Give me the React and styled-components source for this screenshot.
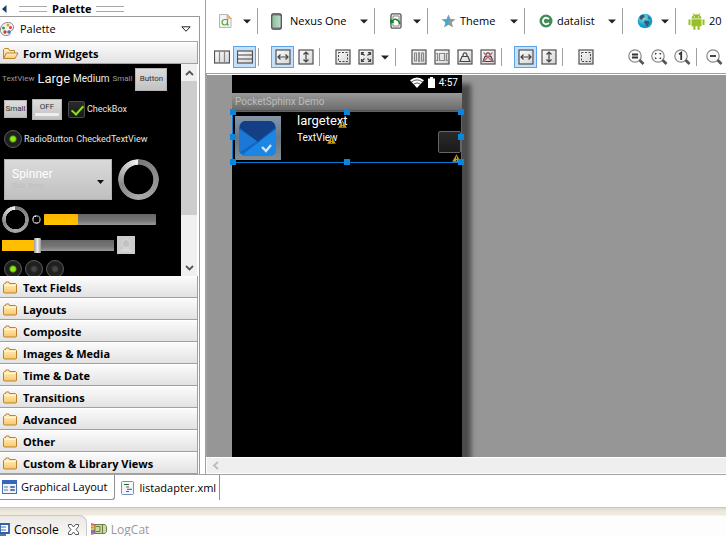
import React from "react";
import styled, { createGlobalStyle, css } from "styled-components";

const Global = createGlobalStyle`
  * { box-sizing: border-box; }
  body { margin: 0; background: #fff; overflow: hidden; }
  button, input, select { font: inherit; color: inherit; margin: 0; padding: 0; border: 0; background: none; }
  svg { display: block; flex: none; }
`;

const ui = `"Open Sans", "Noto Sans", sans-serif`;
const droid = `Roboto, sans-serif`;

const Page = styled.div`
  display: flex;
  flex-direction: column;
  height: 100vh;
  font: 11px/16px ${ui};
  color: #000;
`;
const Workbench = styled.main`
  flex: 1;
  min-height: 0;
  display: grid;
  grid-template-columns: 205px minmax(0, 1fr);
  border-bottom: 1px solid #a2a2a2;
`;

/* ---------- palette ---------- */
const PalettePane = styled.aside`
  display: flex;
  flex-direction: column;
  min-height: 0;
  padding-right: 5px;
`;
const PaletteTitle = styled.header`
  display: flex;
  align-items: center;
  gap: 5px;
  height: 16px;
  padding: 2px 0 0 2px;
  font-weight: 700;
`;
const CollapseButton = styled.button`
  width: 12px;
  height: 12px;
  display: flex;
  align-items: center;
`;
const Grip = styled.span`
  width: 28px;
  height: 6px;
  border: solid #a8a8a8;
  border-width: 1px 0;
`;
const PaletteBody = styled.div`
  flex: 1;
  min-height: 0;
  display: flex;
  flex-direction: column;
  border: solid #9a9a9a;
  border-width: 1px 1px 0 0;
  padding: 0 1px 0 0;
`;
const PaletteMenu = styled.button`
  display: flex;
  align-items: center;
  gap: 6px;
  height: 25px;
  padding: 0 7px 0 0;
  border-bottom: 1px solid #a8a8a8;
  text-align: left;
  span { flex: 1; }
`;
const Drawer = styled.button`
  display: flex;
  align-items: center;
  gap: 4px;
  flex: none;
  height: 22px;
  padding: 2px 0 0 3px;
  border: solid #a0a0a0;
  border-width: 0 1px 1px 0;
  background: linear-gradient(#fcfcfc, #e2e2e2);
  box-shadow: inset 0 1px #fff;
  font-weight: 700;
  text-align: left;
  white-space: nowrap;
`;
const PreviewPane = styled.div`
  flex: 1;
  min-height: 0;
  display: flex;
  overflow: hidden;
`;
const Preview = styled.div`
  flex: 1;
  min-width: 0;
  background: #000;
  color: #e6e6e6;
  font: 9px/12px ${droid};
  overflow: hidden;
`;
const PreviewRow = styled.div`
  display: flex;
  align-items: center;
  gap: ${(p) => p.$gap || 3}px;
  height: ${(p) => p.$h || 30}px;
  padding-left: ${(p) => p.$pad || 4}px;
  white-space: nowrap;
`;
const Sample = styled.span`
  font-size: ${(p) => p.$size}px;
  color: ${(p) => (p.$dim ? "#999" : "#eee")};
`;
const DroidButton = styled.button`
  height: ${(p) => p.$h}px;
  width: ${(p) => p.$w}px;
  background: linear-gradient(#dcdcdc, #c2c2c2);
  border: 1px solid #b4b4b4;
  color: #333;
  font-size: 8px;
  line-height: 10px;
`;
const Toggle = styled(DroidButton)`
  display: flex;
  flex-direction: column;
  align-items: center;
  justify-content: center;
  gap: 1px;
  margin: 0 3px 0 2px;
  i { width: 24px; height: 3px; background: #eee; border-radius: 1px; }
`;
const Field = styled.label`
  display: flex;
  align-items: center;
  gap: 2px;
`;
const Check = styled.input`
  appearance: none;
  position: relative;
  width: ${(p) => p.$size || 17}px;
  height: ${(p) => p.$size || 17}px;
  background: linear-gradient(#2a2a2a, #1a1a1a);
  border: 1px solid ${(p) => (p.$size ? "#666" : "#4a4a4a")};
  border-radius: 2px;
  &:checked::after {
    content: "";
    position: absolute;
    left: 5px;
    top: 1px;
    width: 5px;
    height: 10px;
    border: solid #8fe11c;
    border-width: 0 2px 2px 0;
    transform: rotate(42deg);
  }
`;
const Radio = styled.input`
  appearance: none;
  flex: none;
  width: 18px;
  height: 18px;
  border: 1px solid #5c5c5c;
  border-radius: 50%;
  background: radial-gradient(circle, #444 0 2px, #202020 4px);
  &:checked { background: radial-gradient(circle, #8ee81a 0 2px, #5fae0c 3px, #202020 4px); }
`;
const SpinnerBox = styled.label`
  position: relative;
  display: block;
  width: 108px;
  height: 41px;
  background: linear-gradient(#dadada, #c0c0c0);
  border: 1px solid #b0b0b0;
  select {
    appearance: none;
    width: 100%;
    height: 28px;
    padding: 0 0 0 7px;
    color: #fff;
    font-size: 12px;
  }
  small { position: absolute; left: 7px; top: 20px; font-size: 8px; color: #bfbfbf; }
  svg { position: absolute; right: 7px; top: 20px; }
`;
const Ring = styled.div`
  flex: none;
  width: ${(p) => p.$size}px;
  height: ${(p) => p.$size}px;
  border-radius: 50%;
  background: conic-gradient(#777, #aaa 50%, #888 70%, #f6f6f6);
  mask: radial-gradient(closest-side, transparent ${(p) => p.$hole}%, #000 ${(p) => p.$hole + 4}%);
`;
const track = css`
  background: linear-gradient(#666, #777 60%, #999);
  border-radius: 1px;
`;
const fill = css`
  background: linear-gradient(#ffb400, #ffc400);
  border-radius: 1px;
`;
const Progress = styled.progress`
  appearance: none;
  width: 112px;
  height: 11px;
  &::-webkit-progress-bar { ${track} }
  &::-webkit-progress-value { ${fill} }
`;
const Seek = styled.input`
  appearance: none;
  width: 112px;
  height: 16px;
  background: linear-gradient(90deg, #ffbe00 30%, transparent 30%) center / 100% 11px no-repeat,
    linear-gradient(#666, #777 60%, #999) center / 100% 11px no-repeat;
  &::-webkit-slider-thumb {
    appearance: none;
    width: 7px;
    height: 15px;
    border-radius: 1px;
    background: linear-gradient(90deg, #999, #eee 50%, #999);
  }
`;
const ScrollBar = styled.div`
  width: 17px;
  border-right: 1px solid #fff;
  display: flex;
  flex-direction: column;
  background: #f0f0f0;
  button { height: 17px; display: grid; place-items: center; }
  i { flex: 0 1 134px; background: #cdcdcd; }
  b { flex: 1 0 20px; }
`;

/* ---------- editor ---------- */
const Editor = styled.section`
  display: flex;
  flex-direction: column;
  min-width: 0;
  min-height: 0;
  border-left: 1px solid #a0a0a0;
`;
const Toolbars = styled.div`
  height: 73px;
  padding-top: 8px;
  display: flex;
  flex-direction: column;
  gap: 12px;
  overflow: hidden;
  flex: none;
`;
const ConfigBar = styled.div`
  display: flex;
  height: 26px;
`;
const ConfigItem = styled.label`
  display: flex;
  align-items: center;
  flex: none;
  gap: ${(p) => p.$gap || 4}px;
  width: ${(p) => p.$w}px;
  padding: 0 6px 0 ${(p) => p.$pad || 13}px;
  border-right: 1px solid #a0a0a0;
  select, span { appearance: none; flex: 1; min-width: 0; }
  button { display: flex; align-items: center; justify-content: space-between; flex: 1; }
`;
const ActionBar = styled.div`
  display: flex;
  align-items: center;
  height: 22px;
  padding-left: 4px;
`;
const Tool = styled.button`
  display: grid;
  place-items: center;
  flex: none;
  width: 23px;
  height: 22px;
  ${(p) => p.$on && css`
    background: #c4e0fa;
    border: 1px solid #62a2e4;
  `}
`;
const CaretTool = styled(Tool)`
  width: 16px;
`;
const Divider = styled.span`
  flex: none;
  width: 1px;
  height: 18px;
  background: #a0a0a0;
  margin: 0 ${(p) => p.$after || 11}px 0 2px;
`;
const ZoomTools = styled.div`
  display: flex;
  align-items: center;
  margin-left: 28px;
`;
const Canvas = styled.div`
  flex: 1;
  min-height: 0;
  display: flex;
  border: solid #a0a0a0;
  border-width: 1px 0 0 1px;
  background: #969696;
  box-shadow: inset 0 1px #fff;
  padding: 1px 0 0 25px;
  overflow: hidden;
`;
const Phone = styled.div`
  width: 230px;
  height: 384px;
  flex: none;
  background: #000;
  color: #fff;
  font: 10px/12px ${droid};
  box-shadow: 9px 9px 5px rgba(0, 0, 0, 0.5);
`;
const StatusBar = styled.div`
  display: flex;
  justify-content: flex-end;
  align-items: center;
  gap: 4px;
  height: 18px;
  padding: 0 4px 3px 0;
`;
const AppTitle = styled.div`
  height: 18px;
  padding-left: 3px;
  line-height: 17px;
  color: #bcbcbc;
  background: linear-gradient(#999, #6c6c6c);
  border-bottom: 1px solid #555;
`;
const ListRow = styled.div`
  position: relative;
  display: flex;
  gap: 16px;
  height: 52px;
  padding: 4px 0 0 2px;
  border: 1px solid #0a7cd0;
`;
const RowText = styled.div`
  flex: 1;
  display: flex;
  flex-direction: column;
  gap: 2px;
  margin-top: -4px;
  align-items: flex-start;
`;
const RowLine = styled.span`
  position: relative;
  font-size: ${(p) => p.$size}px;
  line-height: ${(p) => p.$size + 4}px;
`;
const Warning = styled.svg`
  position: absolute;
  right: ${(p) => p.$r}px;
  bottom: ${(p) => p.$b}px;
`;
const Handle = styled.i`
  position: absolute;
  width: 6px;
  height: 6px;
  margin: -3px;
  background: #0a86dc;
  left: ${(p) => p.$x}%;
  top: ${(p) => p.$y}%;
`;
const RowCheck = styled(Check)`
  align-self: flex-start;
  height: 22px;
  width: 23px;
  margin-top: 15px;
`;
const HScroll = styled.div`
  flex: none;
  height: 17px;
  border: solid #fff;
  border-width: 1px 0 1px 1px;
  background: #efefef;
  display: flex;
  align-items: center;
  padding-left: 4px;
`;

/* ---------- bottom ---------- */
const EditorTabs = styled.nav`
  display: flex;
  flex: none;
  height: 32px;
  padding-bottom: 7px;
`;
const EditorTab = styled.button`
  display: flex;
  align-items: center;
  gap: ${(p) => (p.$on ? 4 : 6)}px;
  padding: 0 3px 0 ${(p) => (p.$on ? 2 : 6)}px;
  border-right: 1px solid #909090;
  white-space: nowrap;
  ${(p) => p.$on && css`
    padding-right: 6px;
    border-bottom: 1px solid #909090;
    border-bottom-right-radius: 3px;
  `}
`;
const Views = styled.footer`
  flex: none;
  display: flex;
  border-top: 1px solid #b9c6e0;
  background: linear-gradient(#dedad2, #efeadd 4px 7px, #fdfdfe 8px);
  height: 29px;
  padding-top: 7px;
  font-size: 12px;
  line-height: 13px;
`;
const ViewTab = styled.button`
  display: flex;
  align-items: center;
  gap: 4px;
  padding: 7px 6px 0 4px;
  line-height: 13px;
  color: ${(p) => (p.$on ? "#000" : "#999")};
  ${(p) => p.$on && css`
    padding-left: 0;
    background: linear-gradient(#ebe9e4, #f7f7f5);
    border: solid #c9c9cc;
    border-width: 1px 1px 0 0;
    border-top-right-radius: 8px;
  `}
`;

/* ---------- icons ---------- */
const Caret = () => (
  <svg width="8" height="5" viewBox="0 0 8 5"><path d="M0 0.5h8L4 4.5z" fill="#222" /></svg>
);
const Folder = ({ open }) => (
  <svg width="16" height="16" viewBox="0 0 16 16">
    <defs>
      <linearGradient id="fold" x1="0" y1="0" x2="0" y2="1">
        <stop offset="0" stopColor="#fff3cf" /><stop offset="1" stopColor="#f8c865" />
      </linearGradient>
    </defs>
    {open ? (
      <g stroke="#b98536" fill="url(#fold)">
        <path d="M.5 12.5v-9l1-1h4l1 2h5v3" />
        <path d="M.5 12.5l3-5.500h11.500l-3 5.500z" />
      </g>
    ) : (
      <g stroke="#bb8130" fill="url(#fold)">
        <path d="M.5 12.500v-8l1-1h1l.5-1.500h3l.5 1.500h6l1 1v8l-1 .5h-11z" />
        <path d="M1.500 5.500h11" stroke="#fff6dc" />
      </g>
    )}
  </svg>
);
const PaletteIcon = () => (
  <svg width="14" height="14" viewBox="0 0 14 14">
    <path d="M5 1c5-2 9 1 8.500 5-.5 3-3 2-3.500 4s1 3-3 3.500C3 14 0 11 .5 7c.3-3 2-5 4.500-6z" fill="#f4f4f4" stroke="#888" />
    <circle cx="8" cy="3" r="1.500" fill="#d8a030" /><circle cx="3.500" cy="6" r="1.500" fill="#3aa040" />
    <circle cx="10.500" cy="5.500" r="1.500" fill="#e04030" /><circle cx="5" cy="10" r="1.700" fill="#d03828" />
    <circle cx="9" cy="10" r="1.800" fill="#3b78d0" />
  </svg>
);
const FileIcon = () => (
  <svg width="13" height="16" viewBox="0 0 13 16">
    <path d="M.5 1.500h8l3.500 3.500v9.500H.5z" fill="#eef5fb" stroke="#a9b8c8" />
    <path d="M8 1v4.500h4.500z" fill="#f4b96c" stroke="#dfa563" strokeWidth=".6" />
    <path d="M8.500 6.500H5.500a3 2.800 0 0 0 0 5.500c2 0 3-1.500 3-3.500zM8.500 6v6h1.500" fill="none" stroke="#6aa52c" strokeWidth="1.200" />
  </svg>
);
const PhoneIcon = () => (
  <svg width="11" height="17" viewBox="0 0 11 17">
    <defs><linearGradient id="scr"><stop offset="0" stopColor="#8fc09f" /><stop offset="1" stopColor="#bddcc7" /></linearGradient></defs>
    <rect x=".8" y=".8" width="9.400" height="15.400" rx="1.500" fill="#999" stroke="#444" strokeWidth="1.300" />
    <rect x="1.500" y="3" width="8" height="11" fill="url(#scr)" />
  </svg>
);
const RotateIcon = () => (
  <svg width="12" height="16" viewBox="0 0 12 16">
    <rect x="1" y=".8" width="10" height="14.400" rx="1.500" fill="#f4f4f4" stroke="#555" strokeWidth="1.300" />
    <path d="M3 3h6v10H3z" fill="#fff" stroke="#888" />
    <path d="M2.500 8c2-3 6-2 7.500 3" fill="none" stroke="#168426" strokeWidth="1.500" />
    <path d="M0 5.500v5l4.500-1z" fill="#168426" />
  </svg>
);
const StarIcon = () => (
  <svg width="15" height="14" viewBox="0 0 15 14">
    <path d="M7.500.5l2 4.500 5 .3-3.800 3.300 1.300 4.900-4.500-2.700L3 13.500l1.300-4.900L.5 5.300l5-.3z" fill="#8f979b" />
    <path d="M7.500 3v7L4.500 12l1-3.500L3 6.300l3-.3z" fill="#2db0de" />
  </svg>
);
const ClassIcon = () => (
  <svg width="14" height="14" viewBox="0 0 14 14">
    <circle cx="7" cy="7" r="6.500" fill="#3f8c57" />
    <path d="M9.800 5.200A3.200 3.200 0 1 0 9.800 8.800" fill="none" stroke="#fff" strokeWidth="1.900" />
  </svg>
);
const GlobeIcon = () => (
  <svg width="16" height="16" viewBox="0 0 16 16">
    <defs><radialGradient id="sea" cx=".4" cy=".3"><stop offset="0" stopColor="#7fe0f4" /><stop offset="1" stopColor="#129cc8" /></radialGradient></defs>
    <circle cx="8" cy="8" r="7.300" fill="url(#sea)" />
    <path d="M2.500 4c1-2 3-2.500 4.500-2l1 2-2 1-1 2-2-1zM7.500 7.500l4 .5 1 2-2.500 4-1.500-3-1.500-1.500zM11 3l2.500 2.500-2 .5z" fill="#34596a" />
  </svg>
);
const AndroidIcon = () => (
  <svg width="17" height="17" viewBox="0 0 17 17">
    <g fill="#97c024">
      <path d="M3.500 5.500a5 4.300 0 0 1 10 0zM3.500 6.300h10v7h-10zM.5 6.500h2v5.500h-2zM14.500 6.500h2v5.500h-2zM5.300 13h2.200v3.700H5.300zM9.500 13h2.200v3.700H9.500z" />
      <path d="M5 .3l1.500 2M12 .3l-1.500 2" stroke="#97c024" />
    </g>
    <circle cx="6.300" cy="3.800" r=".6" fill="#fff" /><circle cx="10.700" cy="3.800" r=".6" fill="#fff" />
  </svg>
);
const toolPaths = {
  cols: "M5.500 2v12M10.500 2v12",
  rows: "M1 6h14M1 10h14",
  wide: "M3.500 8h9M5.500 5.500L3 8l2.500 2.500M10.500 5.500L13 8l-2.500 2.500",
  tall: "M8 3.500v9M5.500 5.500L8 3l2.500 2.500M5.500 10.500L8 13l2.500-2.500",
  expand: "M3.500 6V3.500H6M3.500 3.500l3 3M10 3.500h2.500V6M12.500 3.500l-3 3M3.500 10v2.500H6M3.500 12.500l3-3M10 12.500h2.500V10M12.500 12.500l-3-3",
  margins: "M3.500 4v8h2v-8zM10.500 4v8h2v-8z",
  gravity: "M5.500 4.500h5v7h-5zM1.500 4.500h2v7h-2M14.500 4.500h-2v7h2",
  weight: "M3 12.500l2-5h6l2 5zM6.500 7.500a2 2.200 0 1 1 3 0",
};
const ToolIcon = ({ kind }) => {
  const base = kind === "clear" ? "weight" : kind;
  const flat = kind === "cols" || kind === "rows";
  const pale = kind === "gravity" || kind === "cols" || kind === "margins";
  return (
    <svg width="16" height="16" viewBox="0 0 16 16" fill="none">
      <defs>
        <linearGradient id="plate" x1="0" y1="0" x2="1" y2="1"><stop offset="0" stopColor="#fdfdfd" /><stop offset="1" stopColor="#d4d4d4" /></linearGradient>
      </defs>
      <rect x={flat ? 0.5 : 1} y={flat ? 2 : 1} width={flat ? 15 : 14} height={flat ? 12 : 14} fill="url(#plate)" stroke="#505050" strokeWidth="1.200" />
      {kind === "dashed" ? (
        <rect x="3.500" y="3.500" width="9" height="9" stroke="#444" strokeDasharray="2 1.500" />
      ) : (
        <path d={toolPaths[base]} stroke={pale ? "#888" : "#444"} strokeWidth="1.200" />
      )}
      {kind === "margins" && <path d="M8 3v10" stroke="#444" />}
      {kind === "clear" && <path d="M3.500 3.500l9 9M12.500 3.500l-9 9" stroke="#c0707a" strokeWidth="1.500" />}
    </svg>
  );
};
const zoomPaths = {
  fit: "M4 5.500h6M4 8.500h6",
  real: "M5.500 4.500h-1v1M8.500 4.500h1v1M4.500 8.500v1h1M9.500 8.500v1h-1",
  one: "M5 5.200l2.200-1.500V11",
  out: "M4 7h6",
};
const ZoomIcon = ({ kind }) => (
  <svg width="17" height="16" viewBox="0 0 17 16" fill="none">
    <circle cx="7" cy="7" r="6.200" fill="#fafafa" stroke="#888" strokeWidth="1.200" />
    <path d="M11.500 11l4 4" stroke="#555" strokeWidth="2.600" />
    <path d={zoomPaths[kind]} stroke="#333" strokeWidth={kind === "real" ? 1.200 : 1.800} />
  </svg>
);
const WarnIcon = (p) => (
  <Warning width="9" height="8" viewBox="0 0 9 8" aria-hidden="true" {...p}>
    <path d="M4.500.3L8.800 7.700H.2z" fill="#c79a14" /><path d="M4.500 2.500v2.500M4.500 6v1" stroke="#2c2000" />
  </Warning>
);
const MailIcon = () => (
  <svg width="46" height="44" viewBox="0 0 46 44">
    <defs>
      <linearGradient id="bg" x1="0" y1="0" x2="0" y2="1"><stop offset="0" stopColor="#8496a8" /><stop offset=".5" stopColor="#667888" /><stop offset="1" stopColor="#878c92" /></linearGradient>
      <linearGradient id="env" x1="0" y1="0" x2="0" y2="1"><stop offset="0" stopColor="#1b5fae" /><stop offset="1" stopColor="#0a6bd0" /></linearGradient>
    </defs>
    <rect width="46" height="44" fill="url(#bg)" />
    <rect x="4" y="5" width="37" height="35" rx="7" fill="url(#env)" />
    <path d="M5 12c0-5 2-7 6-7h23c4 0 6 2 6 7L25 24c-2 2-3 2-5 0z" fill="#123f86" />
    <path d="M4 13l18 12L5 36l-1-3z" fill="#1c78d4" /><path d="M41 13L7 39l4 1h23c5 0 7-2 7-7z" fill="#1b86e4" />
    <path d="M27 31l4 4 5-6" fill="none" stroke="#cfe8fb" strokeWidth="2.400" />
  </svg>
);
const Chevron = ({ d, w = 9, h = 6, color = "#555" }) => (
  <svg width={w} height={h} viewBox={`0 0 ${w} ${h}`}><path d={d} fill="none" stroke={color} strokeWidth="1.800" /></svg>
);

const drawers = ["Text Fields", "Layouts", "Composite", "Images & Media", "Time & Date", "Transitions", "Advanced", "Other", "Custom & Library Views"];
const handles = [[0, 0], [50, 0], [100, 0], [0, 50], [100, 50], [0, 100], [50, 100], [100, 100]];

const Action = ({ kind, label, on }) => (
  <Tool $on={on} aria-label={label} aria-pressed={!!on}><ToolIcon kind={kind} /></Tool>
);
const ConfigSelect = ({ icon, value, label, ...rest }) => (
  <ConfigItem {...rest}>
    {icon}
    <select aria-label={label} defaultValue={value}><option>{value}</option></select>
    <Caret />
  </ConfigItem>
);

function Palette() {
  return (
    <PalettePane>
      <PaletteTitle>
        <CollapseButton aria-label="Collapse palette">
          <svg width="5" height="8" viewBox="0 0 5 8"><path d="M4.500 0v8L0 4z" fill="#123c6c" /></svg>
        </CollapseButton>
        <Grip />Palette<Grip />
      </PaletteTitle>
      <PaletteBody>
        <PaletteMenu>
          <PaletteIcon /><span>Palette</span>
          <svg width="10" height="7" viewBox="0 0 10 7"><path d="M.8.8h8.400L5 5.300z" fill="#fff" stroke="#222" /></svg>
        </PaletteMenu>
        <Drawer aria-expanded="true"><Folder open />Form Widgets</Drawer>
        <PreviewPane>
          <Preview>
            <PreviewRow $pad={2}>
              <Sample $size={8} $dim>TextView</Sample>
              <Sample $size={13}>Large</Sample>
              <Sample $size={10}>Medium</Sample>
              <Sample $size={8} $dim>Small</Sample>
              <DroidButton $w={32} $h={23}>Button</DroidButton>
            </PreviewRow>
            <PreviewRow>
              <DroidButton $w={23} $h={18}>Small</DroidButton>
              <Toggle $w={30} $h={21}>OFF<i /></Toggle>
              <Field><Check type="checkbox" defaultChecked />CheckBox</Field>
            </PreviewRow>
            <PreviewRow>
              <Field><Radio type="radio" name="sample" defaultChecked />RadioButton</Field>
              <span>CheckedTextView</span>
            </PreviewRow>
            <PreviewRow $h={50} $gap={6}>
              <SpinnerBox>
                <select aria-label="Spinner"><option>Spinner</option></select>
                <small>Sub Item</small>
                <svg width="7" height="4" viewBox="0 0 7 4"><path d="M0 0h7L3.500 4z" fill="#111" /></svg>
              </SpinnerBox>
              <Ring $size={41} $hole={70} />
            </PreviewRow>
            <PreviewRow $pad={2}>
              <Ring $size={27} $hole={70} />
              <Ring $size={9} $hole={64} />
              <Progress value="30" max="100" aria-label="Progress" />
            </PreviewRow>
            <PreviewRow $h={22} $pad={2}>
              <Seek type="range" min="0" max="100" defaultValue="30" aria-label="Seek" />
              <svg width="18" height="18" viewBox="0 0 18 18">
                <rect width="18" height="18" fill="#ccc" /><circle cx="9" cy="7.500" r="4" fill="#c2c2c2" stroke="#d8d8d8" />
                <path d="M3 16c1-5 11-5 12 0z" fill="#d8d8d8" />
              </svg>
            </PreviewRow>
            <PreviewRow $h={26}>
              <Radio type="radio" name="group" aria-label="First" defaultChecked />
              <Radio type="radio" name="group" aria-label="Second" />
              <Radio type="radio" name="group" aria-label="Third" />
            </PreviewRow>
          </Preview>
          <ScrollBar>
            <button aria-label="Scroll up"><Chevron d="M1 5l3.500-3.500L8 5" /></button>
            <i /><b />
            <button aria-label="Scroll down"><Chevron d="M1 1l3.500 3.500L8 1" /></button>
          </ScrollBar>
        </PreviewPane>
        {drawers.map((d) => <Drawer key={d} aria-expanded="false"><Folder />{d}</Drawer>)}
      </PaletteBody>
    </PalettePane>
  );
}

function LayoutEditor() {
  return (
    <Editor>
      <Toolbars>
        <ConfigBar>
          <ConfigItem as="div" $w={52}><FileIcon /><button aria-label="Layout variants"><span /><Caret /></button></ConfigItem>
          <ConfigSelect $w={117} $gap={8} icon={<PhoneIcon />} value="Nexus One" label="Device" />
          <ConfigItem as="div" $w={53} $pad={15}><RotateIcon /><button aria-label="Orientation"><span /><Caret /></button></ConfigItem>
          <ConfigSelect $w={97} icon={<StarIcon />} value="Theme" label="Theme" />
          <ConfigSelect $w={98} $pad={14} icon={<ClassIcon />} value="datalist" label="Activity" />
          <ConfigItem as="div" $w={53} $pad={14}><GlobeIcon /><button aria-label="Locale"><span /><Caret /></button></ConfigItem>
          <ConfigSelect $w={97} $pad={12} icon={<AndroidIcon />} value="20" label="API level" />
        </ConfigBar>
        <ActionBar>
          <Action kind="cols" label="Vertical orientation" /><Action kind="rows" label="Horizontal orientation" on />
          <Divider $after={12} />
          <Action kind="wide" label="Match width" on /><Action kind="tall" label="Match height" />
          <Divider />
          <Action kind="dashed" label="Show margins" /><Action kind="expand" label="Gravity" />
          <CaretTool aria-label="Gravity options"><Caret /></CaretTool>
          <Divider />
          <Action kind="margins" label="Distribute" /><Action kind="gravity" label="Balance" />
          <Action kind="weight" label="Assign weight" /><Action kind="clear" label="Clear weight" />
          <Divider $after={12} />
          <Action kind="wide" label="Fill width" on /><Action kind="tall" label="Fill height" />
          <Divider />
          <Action kind="dashed" label="Outline" />
          <ZoomTools>
            <Tool aria-label="Zoom to fit"><ZoomIcon kind="fit" /></Tool>
            <Tool aria-label="Real size"><ZoomIcon kind="real" /></Tool>
            <Tool aria-label="Zoom 100%"><ZoomIcon kind="one" /></Tool>
            <Divider $after={6} />
            <Tool aria-label="Zoom out"><ZoomIcon kind="out" /></Tool>
          </ZoomTools>
        </ActionBar>
      </Toolbars>
      <Canvas>
        <Phone>
          <StatusBar>
            <svg width="14" height="11" viewBox="0 0 14 11"><path d="M0 3.300Q7-2.300 14 3.300L7 11z" fill="#fff" /><path d="M1.500 5Q7 .8 12.500 5M3.500 7.200Q7 4.500 10.500 7.200" fill="none" stroke="#333" strokeWidth=".8" /></svg>
            <svg width="7" height="11" viewBox="0 0 7 11"><path d="M2 0h3v1.500h2V11H0V1.500h2z" fill="#fff" /></svg>
            <span>4:57</span>
          </StatusBar>
          <AppTitle>PocketSphinx Demo</AppTitle>
          <ListRow>
            <MailIcon />
            <RowText>
              <RowLine $size={13}>largetext<WarnIcon $r={1} $b={1} /></RowLine>
              <RowLine $size={10}>TextView<WarnIcon $r={2} $b={1} /></RowLine>
            </RowText>
            <RowCheck type="checkbox" $size={22} aria-label="Select item" />
            <WarnIcon $r={0} $b={0} />
            {handles.map(([x, y]) => <Handle key={`${x}-${y}`} $x={x} $y={y} />)}
          </ListRow>
        </Phone>
      </Canvas>
      <HScroll><Chevron w={8} h={9} d="M7 1L3 4.500 7 8" color="#bbb" /></HScroll>
    </Editor>
  );
}

export default function App() {
  return (
    <Page>
      <Global />
      <Workbench><Palette /><LayoutEditor /></Workbench>
      <EditorTabs role="tablist">
        <EditorTab role="tab" aria-selected="true" $on>
          <svg width="15" height="14" viewBox="0 0 15 14"><rect x=".5" y=".5" width="14" height="13" fill="#eef3fb" stroke="#4a6ea8" /><path d="M0 0h15v4H0z" fill="#3468b8" /><path d="M2 7h4M2 10h4" stroke="#5a78a8" /><path d="M8.500 6.500h4v1h-4zM8.500 9.500h4v1h-4z" fill="#fff" stroke="#5a78a8" /></svg>
          Graphical Layout
        </EditorTab>
        <EditorTab role="tab" aria-selected="false">
          <svg width="13" height="14" viewBox="0 0 13 14"><rect x=".5" y=".5" width="12" height="13" rx="1" fill="#f2f6fc" stroke="#7a90b8" /><path d="M3 3.500h5" stroke="#1a6a3a" /><path d="M5 6h3M5 10.500h3" stroke="#c03a28" /><path d="M6 8.300h5" stroke="#2858b8" /></svg>
          listadapter.xml
        </EditorTab>
      </EditorTabs>
      <Views>
        <ViewTab $on>
          <svg width="10" height="13" viewBox="0 0 10 13"><path d="M0 1h9v9H0z" fill="#fff" stroke="#2f62a8" strokeWidth="1.800" /><path d="M0 4h6M0 7h6" stroke="#3a6ab8" /><path d="M0 12h6" stroke="#234a80" strokeWidth="1.500" /></svg>
          Console
          <svg width="17" height="11" viewBox="-5 0 17 11"><path d="M.5.5h3l2 2.500 2-2.500h3v2L8 5.500l2.500 3v2h-3l-2-2.500-2 2.500h-3v-2L3 5.500l-2.500-3z" fill="#fff" stroke="#555" /></svg>
        </ViewTab>
        <ViewTab>
          <svg width="16" height="12" viewBox="0 0 16 12"><path d="M0 0l4 1v10l-4 1z" fill="#e0609a" /><path d="M0 3l4 1M0 6h4" stroke="#e8c030" strokeWidth="2" /><path d="M0 9l4-1" stroke="#4a80e0" strokeWidth="2" /><path d="M4 1.500h10l1.500 2v5l-1.500 2H4z" fill="#c9dc9a" stroke="#6d7d48" /><path d="M5 3.500h4v5H5M11.500 2v8" fill="none" stroke="#6d7d48" /></svg>
          LogCat
        </ViewTab>
      </Views>
    </Page>
  );
}
